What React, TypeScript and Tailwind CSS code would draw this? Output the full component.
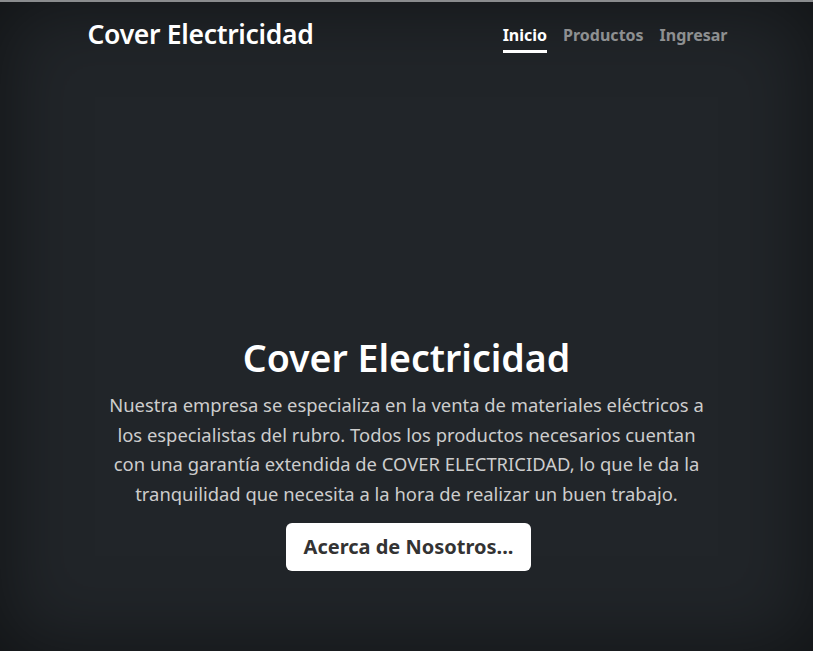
export default function App() {
  return (
    <div
      className="min-h-screen w-full bg-[#212529] text-white flex flex-col border-t-2 border-[#8a8c8e] shadow-[inset_0_0_5rem_rgba(0,0,0,0.5)]"
      style={{ fontFamily: '"Noto Sans", "Open Sans", sans-serif' }}
    >
      <div className="w-[640px] mx-auto flex flex-col flex-1">
        {/* Header */}
        <header className="flex items-start justify-between pt-[17px]">
          <h3 className="text-[26.5px] font-semibold leading-[31px] tracking-[-0.3px] ml-[1px]">Cover Electricidad</h3>
          <nav className="flex items-start gap-[16px] pt-[6px] mr-[-1px]">
            <a className="text-[16px] font-bold text-white border-b-[3px] border-white pb-[5px] leading-[20px]">Inicio</a>
            <a className="text-[16px] font-bold text-white/50 border-b-[3px] border-transparent pb-[5px] leading-[20px]">Productos</a>
            <a className="text-[16px] font-bold text-white/50 border-b-[3px] border-transparent pb-[5px] leading-[20px]">Ingresar</a>
          </nav>
        </header>

        {/* Contenido */}
        <main className="flex flex-col items-center text-center mt-[282px]">
          <h1 className="text-[37.5px] font-semibold leading-[46px]">Cover Electricidad</h1>
          <p className="mt-[9px] w-[602px] text-[18.4px] leading-[29.7px] text-[#cdcdcd]">
            Nuestra empresa se especializa en la venta de materiales eléctricos a los especialistas del rubro. Todos los productos necesarios cuentan con una garantía extendida de COVER ELECTRICIDAD, lo que le da la tranquilidad que necesita a la hora de realizar un buen trabajo.
          </p>
          <button className="mt-[14px] ml-[4px] h-[48px] px-[18px] rounded-[6px] bg-white text-[#333] text-[20px] font-bold">
            Acerca de Nosotros...
          </button>
        </main>
      </div>
    </div>
  );
}
